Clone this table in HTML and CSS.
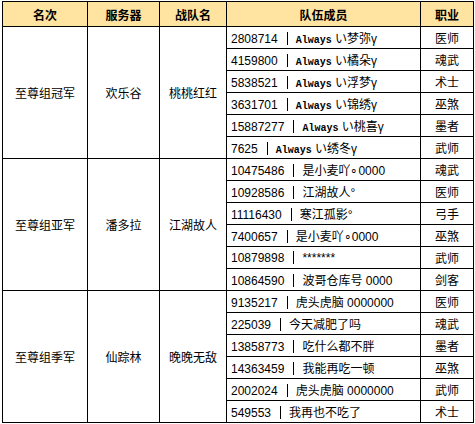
FILE: index.html
```html
<!DOCTYPE html>
<html lang="zh">
<head>
<meta charset="utf-8">
<title>至尊组排名</title>
<link rel="stylesheet" href="styles.css">
</head>
<body>
<table class="rank">
  <colgroup>
    <col class="c-rank"><col class="c-server"><col class="c-team"><col class="c-member"><col class="c-job">
  </colgroup>
  <thead>
    <tr><th>名次</th><th>服务器</th><th>战队名</th><th>队伍成员</th><th>职业</th></tr>
  </thead>
  <tbody>
    <tr><td class="grp" rowspan="6">至尊组冠军</td><td class="grp" rowspan="6">欢乐谷</td><td class="grp" rowspan="6">桃桃红红</td>
      <td class="mem">2808714<span class="sep"></span><span class="en">Always</span> い梦弥γ</td><td class="job">医师</td></tr>
    <tr><td class="mem">4159800<span class="sep"></span><span class="en">Always</span> い橘朵γ</td><td class="job">魂武</td></tr>
    <tr><td class="mem">5838521<span class="sep"></span><span class="en">Always</span> い浮梦γ</td><td class="job">术士</td></tr>
    <tr><td class="mem">3631701<span class="sep"></span><span class="en">Always</span> い锦绣γ</td><td class="job">巫煞</td></tr>
    <tr><td class="mem">15887277<span class="sep"></span><span class="en">Always</span> い桃喜γ</td><td class="job">墨者</td></tr>
    <tr><td class="mem">7625<span class="sep"></span><span class="en">Always</span> い绣冬γ</td><td class="job">武师</td></tr>

    <tr><td class="grp" rowspan="6">至尊组亚军</td><td class="grp" rowspan="6">潘多拉</td><td class="grp" rowspan="6">江湖故人</td>
      <td class="mem">10475486<span class="sep"></span>是小麦吖∘0000</td><td class="job">魂武</td></tr>
    <tr><td class="mem">10928586<span class="sep"></span>江湖故人°</td><td class="job">医师</td></tr>
    <tr><td class="mem">11116430<span class="sep"></span>寒江孤影°</td><td class="job">弓手</td></tr>
    <tr><td class="mem">7400657<span class="sep"></span>是小麦吖∘0000</td><td class="job">巫煞</td></tr>
    <tr><td class="mem">10879898<span class="sep"></span>*******</td><td class="job">武师</td></tr>
    <tr><td class="mem">10864590<span class="sep"></span>波哥仓库号 0000</td><td class="job">剑客</td></tr>

    <tr><td class="grp" rowspan="6">至尊组季军</td><td class="grp" rowspan="6">仙踪林</td><td class="grp" rowspan="6">晚晚无敌</td>
      <td class="mem">9135217<span class="sep"></span>虎头虎脑 0000000</td><td class="job">医师</td></tr>
    <tr><td class="mem">225039<span class="sep"></span>今天减肥了吗</td><td class="job">魂武</td></tr>
    <tr><td class="mem">13858773<span class="sep"></span>吃什么都不胖</td><td class="job">墨者</td></tr>
    <tr><td class="mem">14363459<span class="sep"></span>我能再吃一顿</td><td class="job">巫煞</td></tr>
    <tr><td class="mem">2002024<span class="sep"></span>虎头虎脑 0000000</td><td class="job">武师</td></tr>
    <tr><td class="mem">549553<span class="sep"></span>我再也不吃了</td><td class="job">术士</td></tr>
  </tbody>
</table>
</body>
</html>
```

FILE: styles.css
```css
html, body {
  margin: 0;
  padding: 0;
  background: #ffffff;
}
body {
  padding: 1px 2px;
  font-family: "Liberation Sans", "Noto Sans CJK SC", sans-serif;
  font-size: 12px;
  color: #000000;
}
.rank {
  border-collapse: collapse;
  width: 471px;
  table-layout: fixed;
}
.c-rank { width: 85px; }
.c-server { width: 72px; }
.c-team { width: 67px; }
.c-member { width: 194px; }
.c-job { width: 53px; }
.rank th, .rank td {
  border: 1px solid #000000;
  padding: 0;
  white-space: nowrap;
  overflow: hidden;
}
.rank th {
  background: #ffe3a0;
  height: 24px;
  font-weight: bold;
  font-size: 12px;
  text-align: center;
  vertical-align: middle;
}
.rank td {
  height: 21px;
  vertical-align: middle;
}
.grp {
  text-align: center;
  font-size: 12px;
}
.mem {
  padding-left: 4px !important;
  text-align: left;
}
.sep {
  display: inline-block;
  width: 1px;
  height: 13px;
  background: #000000;
  margin: 0 8px 0 9px;
  vertical-align: -2px;
}
.en {
  font-family: "Liberation Mono", monospace;
  font-size: 10px;
  font-weight: bold;
}
.job {
  text-align: center;
}
```
